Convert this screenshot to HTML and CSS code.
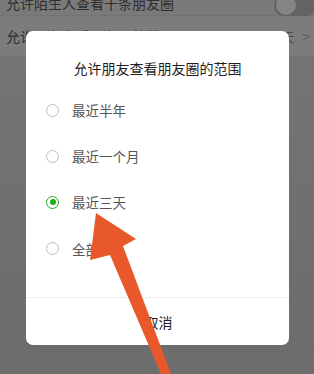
FILE: index.html
```html
<!DOCTYPE html>
<html lang="zh">
<head>
<meta charset="utf-8">
<link rel="stylesheet" href="styles.css">
</head>
<body>
<div class="page">
  <div class="row row-top">
    <span class="row-text">允许陌生人查看十条朋友圈</span>
    <span class="toggle"><span class="knob"></span></span>
  </div>
  <div class="row row-second">
    <span class="row-text">允许朋友查看朋友圈的范围</span>
    <span class="row-value">最近三天<span class="chev">&gt;</span></span>
  </div>
  <div class="section"></div>
</div>

<div class="dialog">
  <div class="title">允许朋友查看朋友圈的范围</div>
  <ul class="options">
    <li class="option"><span class="radio"></span><span class="label">最近半年</span></li>
    <li class="option"><span class="radio"></span><span class="label">最近一个月</span></li>
    <li class="option"><span class="radio checked"></span><span class="label">最近三天</span></li>
    <li class="option"><span class="radio"></span><span class="label">全部</span></li>
  </ul>
  <div class="footer">取消</div>
</div>

<svg class="arrow" width="314" height="374" viewBox="0 0 314 374">
  <polygon points="96,213 136,239 123,246 171,374 161,374 110,255 90,260" fill="#e8582a"/>
</svg>
</body>
</html>
```

FILE: styles.css
```css
html, body {
  margin: 0;
  padding: 0;
}
body {
  width: 314px;
  height: 374px;
  overflow: hidden;
  background: #6e6e6e;
  font-family: "Noto Sans CJK SC", "Noto Sans", sans-serif;
  position: relative;
}
.page {
  display: flex;
  flex-direction: column;
}
.row {
  display: flex;
  align-items: center;
  justify-content: space-between;
  padding: 0 4px 0 6px;
  color: #2e2e2e;
  font-size: 14px;
}
.row-top {
  height: 33px;
  margin-top: -18px;
  background: #7a7a7a;
  border-bottom: 1px solid #737373;
}
.row-top .row-text {
  margin-top: 8px;
}
.toggle {
  width: 42px;
  height: 24px;
  border-radius: 12px;
  background: #646464;
  margin-top: 12px;
  margin-right: -6px;
  display: flex;
  align-items: center;
  padding-left: 2px;
  box-sizing: border-box;
}
.knob {
  width: 20px;
  height: 20px;
  border-radius: 50%;
  background: #858585;
}
.row-second {
  height: 40px;
  background: #7c7c7c;
}
.row-value {
  color: #4a4a4a;
  font-size: 13px;
  display: flex;
  align-items: center;
}
.chev {
  margin-left: 8px;
  font-size: 14px;
  color: #5a5a5a;
}
.section {
  height: 301px;
  background: linear-gradient(#747474, #6c6c6c);
}
.dialog {
  position: absolute;
  left: 26px;
  top: 31px;
  width: 263px;
  height: 314px;
  background: #ffffff;
  border-radius: 7px;
  display: flex;
  flex-direction: column;
}
.title {
  height: 72px;
  display: flex;
  align-items: center;
  justify-content: center;
  font-size: 14px;
  color: #1e1e1e;
  padding-top: 1px;
  box-sizing: border-box;
}
.options {
  list-style: none;
  margin: -16px 0 0;
  padding: 0;
  flex: 1;
}
.option {
  height: 46px;
  display: flex;
  align-items: center;
  padding-left: 20px;
}
.option:last-child {
  height: 47px;
}
.radio {
  width: 13px;
  height: 13px;
  border: 1px solid #bdbdbd;
  border-radius: 50%;
  box-sizing: border-box;
  display: flex;
  align-items: center;
  justify-content: center;
}
.radio.checked {
  border: 1.5px solid #1aad19;
}
.radio.checked::after {
  content: "";
  width: 6px;
  height: 6px;
  border-radius: 50%;
  background: #1aad19;
}
.label {
  margin-left: 13px;
  font-size: 13.5px;
  color: #555555;
}
.footer {
  height: 47px;
  border-top: 1px solid #eeeeee;
  display: flex;
  align-items: center;
  justify-content: center;
  font-size: 14px;
  color: #1e1e1e;
  padding-left: 2px;
}
.arrow {
  position: absolute;
  left: 0;
  top: 0;
}
```
